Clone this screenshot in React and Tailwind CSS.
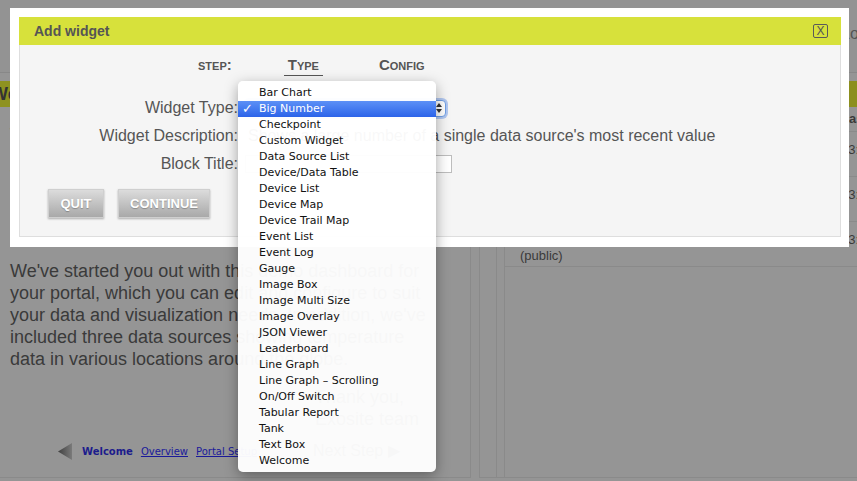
import React from "react";

const widgetTypes = [
  "Bar Chart",
  "Big Number",
  "Checkpoint",
  "Custom Widget",
  "Data Source List",
  "Device/Data Table",
  "Device List",
  "Device Map",
  "Device Trail Map",
  "Event List",
  "Event Log",
  "Gauge",
  "Image Box",
  "Image Multi Size",
  "Image Overlay",
  "JSON Viewer",
  "Leaderboard",
  "Line Graph",
  "Line Graph – Scrolling",
  "On/Off Switch",
  "Tabular Report",
  "Tank",
  "Text Box",
  "Welcome",
];

const rows = [
  { name: "Temperature - Denver", sub: "(public)", value: "21.4", unit: "C", time: "13:42" },
  { name: "Temperature - London", sub: "(public)", value: "14.2", unit: "C", time: "13:42" },
  { name: "Temperature - Sydney", sub: "(public)", value: "30.0", unit: "C", time: "13:42" },
];

const App = () => {
  const selected = "Big Number";

  return (
    <div className="relative w-[857px] h-[481px] overflow-hidden bg-[#959595] font-['Liberation_Sans',Arial,sans-serif] text-[#3a3a3a]">
      {/* Dimmed page underneath */}
      <div className="h-[73px] border-b border-[#888] bg-[#939393] pt-[22px] pl-[841px] whitespace-nowrap text-[16px] text-[#555]">
        Logout
      </div>

      <div className="flex h-[405px] pt-[8px]">
        {/* Left panel */}
        <div className="w-[471px] shrink-0 border-r border-b border-[#8a8a8a] flex flex-col">
          <div className="h-[26px] bg-[#8e9220] flex items-center whitespace-nowrap overflow-hidden">
            <span className="-ml-[9px] text-[18px] font-bold text-[#333]">Welcome to your Portal</span>
          </div>
          <div className="pl-[10px] text-[18px] leading-[22px] whitespace-nowrap">
            <p className="mt-[17px]">Welcome!</p>
            <p className="mt-[20px]">
              This is the home dashboard of your new portal.
              <br />
              Use the menu to explore.
            </p>
            <p className="mt-[50px]">
              We've started you out with this demo dashboard for
              <br />
              your portal, which you can edit and configure to suit
              <br />
              your data and visualization needs. In addition, we've
              <br />
              included three data sources showing temperature
              <br />
              data in various locations around the globe.
            </p>
            <p className="mt-[16px] pl-[305px]">
              Thank you,
              <br />
              Exosite team
            </p>
          </div>
          <div className="mt-[9px] flex items-center pl-[58px] font-['DejaVu_Sans',sans-serif] text-[10px] whitespace-nowrap">
            <svg width="14" height="17" viewBox="0 0 14 17">
              <defs>
                <linearGradient id="navArrow" x1="0" x2="1" y1="0" y2="0">
                  <stop offset="0" stopColor="#3f3f3f" />
                  <stop offset="1" stopColor="#7a7a7a" />
                </linearGradient>
              </defs>
              <path d="M14 0 L0 8.5 L14 17 Z" fill="url(#navArrow)" />
            </svg>
            <span className="ml-[10px] font-bold text-[#1c1c8c]">Welcome</span>
            <span className="ml-[8px] underline text-[#1a1a9a]">Overview</span>
            <span className="ml-[8px] underline text-[#1a1a9a]">Portal Setup</span>
            <span className="ml-[56px] text-[16px] font-['Liberation_Sans',Arial,sans-serif] text-[#3a3a3a]">Next Step ▶</span>
          </div>
        </div>

        {/* Right panel */}
        <div className="ml-[8px] flex-1 border-l border-b border-[#8a8a8a] flex flex-col">
          <div className="h-[26px] bg-[#8c8f1e] shrink-0" />
          <div className="flex-1 flex pl-[16px]">
            <div className="flex-1 border-l border-[#8a8a8a] pl-[7px] flex">
              <div className="flex-1 border-l border-[#8a8a8a] text-[13px] whitespace-nowrap">
                <div className="h-[25px] flex items-center border-b border-[#8a8a8a] font-bold">
                  <span className="w-[170px] pl-[15px]">Data Source</span>
                  <span className="w-[83px] pl-[3px]">Value</span>
                  <span className="w-[83px]">Units</span>
                  <span>Last</span>
                </div>
                {rows.map((row) => (
                  <div key={row.name} className="h-[45px] flex items-start pt-[10px] leading-[16px] border-b border-[#8a8a8a]">
                    <span className="w-[170px] pl-[15px] overflow-hidden">
                      {row.name}
                      <br />
                      {row.sub}
                    </span>
                    <span className="w-[83px] pl-[3px]">{row.value}</span>
                    <span className="w-[83px]">{row.unit}</span>
                    <span>{row.time}</span>
                  </div>
                ))}
              </div>
            </div>
          </div>
        </div>
      </div>

      {/* Modal */}
      <div className="absolute left-[10px] top-[8px] w-[839px] h-[239px] bg-white pl-[9px] pt-[9px] pr-[8px] pb-[10px]">
        <div className="h-full flex flex-col border border-[#dedede] border-t-0">
          <div className="h-[28px] shrink-0 bg-[#d7e13b] flex items-center justify-between pl-[15px] pr-[13px] -mx-px">
            <span className="text-[14px] font-bold text-[#555]">Add widget</span>
            <span className="w-[15px] h-[14px] border border-[#5a5a5a] rounded-[2px] flex items-center justify-center text-[12px] leading-none font-light text-[#555]">
              X
            </span>
          </div>
          <div className="flex-1 bg-[#f5f5f5] text-[#555]">
            {/* Steps */}
            <div className="mt-[10px] h-[22px] flex items-start pl-[178px] font-bold text-[15px] leading-[20px] [font-variant:small-caps]">
              <span>step:</span>
              <span className="ml-[52px] px-[4px] border-b border-[#555]">Type</span>
              <span className="ml-[56px]">Config</span>
            </div>

            {/* Form */}
            <div className="mt-[17px] text-[16px]">
              <div className="h-[28px] flex items-center">
                <span className="w-[218px] text-right">Widget Type:</span>
                <div className="ml-[7px] w-[201px] h-[17px] bg-white border border-[#6f9fe6] rounded-[4px] shadow-[0_0_0_2px_rgba(120,160,235,0.55)] flex items-center justify-end pr-[3px]">
                  <svg width="6" height="10" viewBox="0 0 6 10">
                    <path d="M3 0 L6 4 L0 4 Z M0 6 L6 6 L3 10 Z" fill="#333" />
                  </svg>
                </div>
              </div>
              <div className="h-[28px] flex items-center whitespace-nowrap">
                <span className="w-[218px] text-right">Widget Description:</span>
                <span className="ml-[10px]">Shows a large number of a single data source's most recent value</span>
              </div>
              <div className="h-[28px] flex items-center">
                <span className="w-[218px] text-right">Block Title:</span>
                <div className="ml-[7px] w-[207px] h-[18px] bg-white border border-[#bdbdbd]" />
              </div>
            </div>

            {/* Buttons */}
            <div className="mt-[11px] flex gap-[14px] pl-[28px]">
              <button className="w-[56px] h-[29px] border border-[#cfcfcf] bg-linear-to-b from-[#dcdcdc] to-[#a9a9a9] shadow-[0_1px_2px_rgba(0,0,0,0.3)] text-white font-bold text-[13px] [text-shadow:0_1px_1px_rgba(0,0,0,0.25)]">
                QUIT
              </button>
              <button className="w-[92px] h-[29px] border border-[#cfcfcf] bg-linear-to-b from-[#dcdcdc] to-[#a9a9a9] shadow-[0_1px_2px_rgba(0,0,0,0.3)] text-white font-bold text-[13px] [text-shadow:0_1px_1px_rgba(0,0,0,0.25)]">
                CONTINUE
              </button>
            </div>
          </div>
        </div>
      </div>

      {/* Open select menu */}
      <div className="absolute left-[238px] top-[81px] w-[198px] h-[391px] pt-[4px] pb-[3px] rounded-[5px] bg-white/[0.96] shadow-[0_4px_14px_rgba(0,0,0,0.35)] font-['DejaVu_Sans',sans-serif] text-[11px] text-[#111]">
        {widgetTypes.map((type) => (
          <div
            key={type}
            className={`relative h-[16px] leading-[16px] pl-[21px] whitespace-nowrap ${
              type === selected ? "bg-linear-to-b from-[#5c90f6] to-[#2c63e9] text-white" : ""
            }`}
          >
            {type === selected && (
              <span className="absolute left-[4px] top-0 text-[13px] font-bold">✓</span>
            )}
            {type}
          </div>
        ))}
      </div>
    </div>
  );
};

export default App;
